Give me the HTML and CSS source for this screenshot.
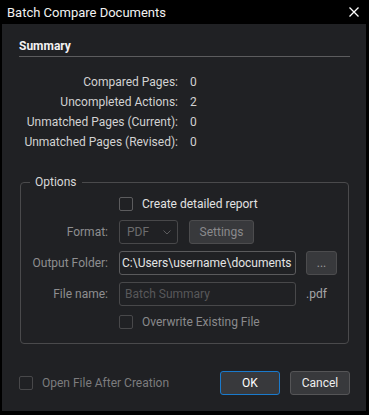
FILE: index.html
```html
<!DOCTYPE html>
<html lang="en">
  <head>
    <meta charset="UTF-8" />
    <meta name="viewport" content="width=device-width, initial-scale=1.0" />
    <title>Batch Compare Documents</title>
    <link rel="stylesheet" href="styles.css">
  </head>
  <body>
    <div class="window">
      <header class="titlebar">
        <span class="title">Batch Compare Documents</span>
        <button class="close" aria-label="Close">
          <svg width="10" height="10" viewBox="0 0 10 10">
            <path d="M0.5 0.5 L9.5 9.5 M9.5 0.5 L0.5 9.5" stroke="#fff" stroke-width="1.3" fill="none" />
          </svg>
        </button>
      </header>

      <main class="content">
        <h2 class="section-title">Summary</h2>
        <dl class="stats">
          <dt>Compared Pages:</dt><dd>0</dd>
          <dt>Uncompleted Actions:</dt><dd>2</dd>
          <dt>Unmatched Pages (Current):</dt><dd>0</dd>
          <dt>Unmatched Pages (Revised):</dt><dd>0</dd>
        </dl>

        <fieldset class="options">
          <legend>Options</legend>
          <div class="form">
            <span></span>
            <label class="check span-2"><span class="box"></span>Create detailed report</label>

            <span class="label">Format:</span>
            <div class="inline span-2">
              <div class="select">
                PDF
                <svg width="8" height="5" viewBox="0 0 8 5">
                  <path d="M0.5 0.5 L4 4 L7.5 0.5" stroke="#5c5c5e" stroke-width="1" fill="none" />
                </svg>
              </div>
              <button class="btn btn-disabled settings">Settings</button>
            </div>

            <span class="label">Output Folder:</span>
            <input class="field" type="text" value="C:\Users\username\documents">
            <button class="btn browse">...</button>

            <span class="label">File name:</span>
            <input class="field field-disabled" type="text" placeholder="Batch Summary">
            <span class="ext">.pdf</span>

            <span></span>
            <label class="check check-disabled span-2"><span class="box"></span>Overwrite Existing File</label>
          </div>
        </fieldset>

        <footer class="footer">
          <label class="check check-dim"><span class="box"></span>Open File After Creation</label>
          <div class="actions">
            <button class="btn btn-primary">OK</button>
            <button class="btn">Cancel</button>
          </div>
        </footer>
      </main>
    </div>
  </body>
</html>
```

FILE: styles.css
```css
html,
body {
  margin: 0;
  padding: 0;
  background: #000;
}
body {
  font-family: Roboto, "Liberation Sans", sans-serif;
  font-size: 12px;
  color: #d2d2d2;
}
.window {
  width: 369px;
  height: 415px;
  display: flex;
  flex-direction: column;
}
.titlebar {
  height: 24px;
  display: flex;
  align-items: center;
  justify-content: space-between;
  padding: 0 10px 0 7px;
  color: #f2f2f2;
  font-size: 13px;
}
.close {
  background: none;
  border: none;
  padding: 0;
  width: 10px;
  height: 10px;
  display: flex;
}
.content {
  height: 387px;
  margin: 0 3px 0 2px;
  padding: 14px 16px 0 17px;
  box-sizing: border-box;
  background: #202124;
}
.section-title {
  margin: 0;
  font-size: 12px;
  line-height: 16px;
  font-weight: bold;
  color: #f2f2f2;
  padding-bottom: 2px;
  border-bottom: 1px solid #5c5c5e;
}
.stats {
  display: grid;
  grid-template-columns: 159px auto;
  grid-auto-rows: 20px;
  column-gap: 12px;
  align-items: center;
  margin: 15px 0 0;
}
.stats dt {
  text-align: right;
}
.stats dd {
  margin: 0;
}
.options {
  margin: 22px 1px 0;
  padding: 5px 0 12px;
  border: 1px solid #4a4a4c;
  border-radius: 4px;
}
.options legend {
  margin-left: 9px;
  padding: 0 5px;
  line-height: 16px;
  color: #d8d8d8;
}
.form {
  display: grid;
  grid-template-columns: 87px 177px 31px;
  grid-template-rows: 18px 24px 24px 24px 18px;
  column-gap: 11px;
  row-gap: 7px;
  align-items: center;
}
.form .browse {
  margin-left: -1px;
}
.span-2 {
  grid-column: span 2;
}
.label {
  text-align: right;
  color: #8e8e90;
}
.check {
  display: flex;
  align-items: center;
  gap: 9px;
  color: #e2e2e2;
}
.check .box {
  width: 12px;
  height: 12px;
  border: 1px solid #5c5c5e;
  border-radius: 2px;
}
.check-disabled {
  color: #8a8a8c;
}
.check-disabled .box {
  border-color: #48484a;
}
.check-dim {
  color: #7c7c7e;
}
.check-dim .box {
  border-color: #48484a;
}
.inline {
  display: flex;
  gap: 11px;
  height: 24px;
}
.select {
  width: 59px;
  height: 24px;
  box-sizing: border-box;
  border: 1px solid #48484a;
  border-radius: 3px;
  padding: 0 6px 0 7px;
  display: flex;
  align-items: center;
  justify-content: space-between;
  color: #6c6c6e;
}
.btn {
  height: 24px;
  box-sizing: border-box;
  border: 1px solid #555557;
  border-radius: 3px;
  background: #38393c;
  color: #eeeeee;
  font-family: inherit;
  font-size: 12px;
  padding: 0;
}
.settings {
  width: 65px;
}
.btn-disabled {
  color: #8a8a8c;
  border-color: #4c4c4e;
}
.browse {
  width: 31px;
  color: #9a9a9c;
  border-color: #4c4c4e;
}
.field {
  width: 177px;
  height: 24px;
  box-sizing: border-box;
  border: 1px solid #5a5a5c;
  border-radius: 3px;
  background: transparent;
  color: #e4e4e4;
  font-family: inherit;
  font-size: 12px;
  padding: 0 2px 0 2px;
  outline: none;
}
.field-disabled {
  border-color: #48484a;
  padding-left: 5px;
}
.field-disabled::placeholder {
  color: #58585a;
}
.ext {
  color: #a6a6a8;
  margin-left: -1px;
}
.footer {
  display: flex;
  align-items: center;
  justify-content: space-between;
  margin-top: 27px;
  height: 24px;
}
.actions {
  display: flex;
  gap: 10px;
}
.actions .btn {
  width: 60px;
}
.btn-primary {
  border-color: #1a7acc;
  color: #ffffff;
}
```
